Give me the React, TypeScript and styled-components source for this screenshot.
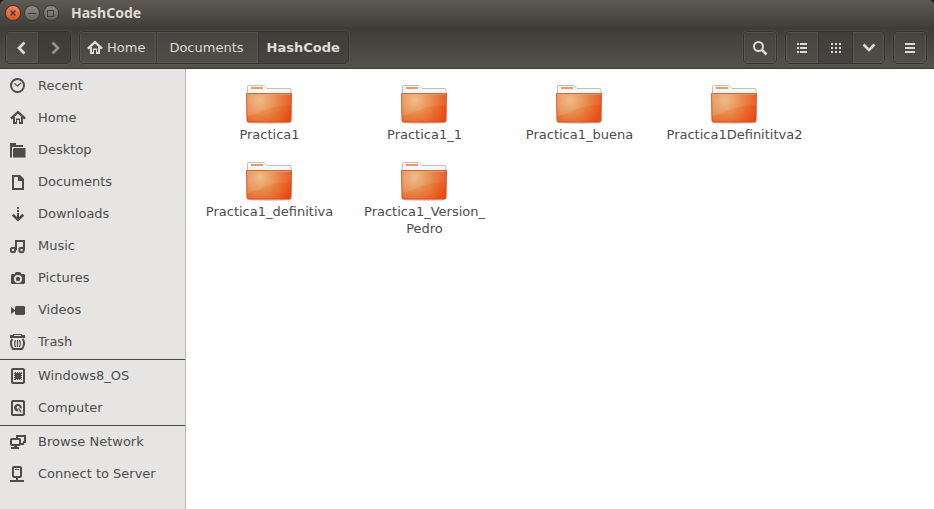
import React, { ReactNode } from "react";
import styled, { createGlobalStyle, css } from "styled-components";

const GlobalStyle = createGlobalStyle`
  * { box-sizing: border-box; }
  html, body, #root { height: 100%; }
  body {
    margin: 0;
    background: #fff;
    color: #4c4c4c;
    font: 13px/17px "DejaVu Sans", sans-serif;
  }
  button { font: inherit; color: inherit; cursor: default; }
`;

const Window = styled.div`
  display: flex;
  flex-direction: column;
  min-height: 100%;
  background: #1b1a18;
`;

const TitleBar = styled.header`
  display: flex;
  align-items: center;
  gap: 3px;
  height: 27px;
  padding: 0 5px 2px;
  border-radius: 5px 5px 0 0;
  background: linear-gradient(#5c5a51, #403f3a);
`;

const Title = styled.h1`
  margin: 0 0 0 9px;
  color: #dfdbd2;
  font: 700 14px/20px "Noto Sans", sans-serif;
`;

const WindowButton = styled.button<{ $close?: boolean }>`
  display: grid;
  place-items: center;
  width: 16px;
  height: 16px;
  padding: 0;
  border: 1px solid #3b3934;
  border-radius: 50%;
  color: #3c3b37;
  background: ${(p) =>
    p.$close
      ? "linear-gradient(#f68459, #e2531f)"
      : "linear-gradient(#8d8b84, #67655e)"};
`;

const Toolbar = styled.div`
  display: flex;
  align-items: flex-start;
  gap: 8px;
  height: 42px;
  padding: 4px 7px 0 5px;
  border-bottom: 1px solid #393833;
  color: #dfdbd2;
  background: linear-gradient(#3d3c38, #53514a);
`;

const Spacer = styled.div`
  flex: 1;
`;

const Group = styled.div`
  display: flex;
  height: 33px;
  border: 1px solid #34332f;
  border-radius: 5px;
  overflow: hidden;
  box-shadow: 0 0 0 1px rgba(255, 255, 255, 0.04);
`;

const ToolButton = styled.button<{ $active?: boolean; $path?: boolean }>`
  display: flex;
  align-items: center;
  justify-content: center;
  gap: 4px;
  min-width: 32px;
  padding: 0;
  border: 0;
  background: linear-gradient(#45443f, #504e48);
  box-shadow: inset 0 0 0 1px rgba(255, 255, 255, 0.07);

  & + & {
    border-left: 1px solid #373632;
  }
  ${(p) =>
    p.$path &&
    css`
      padding: 0 14px 0 12px;
      &:first-child { padding: 0 11px 0 7px; }
      &:last-child { padding: 0 8px; font-weight: 700; }
    `}
  ${(p) =>
    p.$active &&
    css`
      min-width: 34px;
      background: linear-gradient(#3f3e39, #454440);
      box-shadow: none;
    `}
  &:disabled {
    color: #96938b;
    background: linear-gradient(#3c3b37, #42413c);
    box-shadow: none;
  }
`;

const Body = styled.div`
  display: flex;
  flex: 1;
`;

const Sidebar = styled.nav`
  flex: 0 0 186px;
  padding-top: 1px;
  border-right: 1px solid #b8b5af;
  background: #e6e5e3;
`;

const PlaceList = styled.ul`
  margin: 0;
  padding: 0;
  list-style: none;

  & + & {
    margin-top: 1px;
    border-top: 1px solid #4a4a4a;
  }
`;

const PlaceLink = styled.a`
  display: flex;
  align-items: center;
  gap: 12px;
  height: 32px;
  padding-left: 10px;
  color: #4c4c4c;
  text-decoration: none;

  span { padding-bottom: 1px; }
`;

const Files = styled.main`
  display: grid;
  flex: 1;
  grid-template-columns: repeat(auto-fill, 155px);
  align-content: start;
  row-gap: 14px;
  padding: 11px 0 12px 6px;
  background: #fff;
`;

const FolderItem = styled.button`
  display: flex;
  flex-direction: column;
  align-items: center;
  padding: 0;
  border: 0;
  background: none;
`;

const FolderName = styled.span`
  margin-top: -2px;
`;

const Glyph = styled.svg`
  display: block;
  flex: none;
  fill: currentColor;
`;

const SharedDefs = styled.svg`
  position: absolute;
`;

function Icon({ size = 16, children }: { size?: number; children: ReactNode }) {
  return (
    <Glyph width={size} height={size} viewBox={`0 0 ${size} ${size}`} aria-hidden="true">
      {children}
    </Glyph>
  );
}

const line = { fill: "none", stroke: "currentColor", strokeWidth: 2 };

const homeShape = (
  <>
    <path d="M.9 8.600 8 2.200l7.100 6.400" {...line} strokeWidth={2.4} />
    <path d="M3 7h2v7H3zM11 7h2v7h-2zM4 12h3v2H4zM9 12h3v2H9zM6 9h1v4H6zM9 9h1v4H9zM6 8.500h4V10H6z" />
  </>
);

const icons: Record<string, ReactNode> = {
  recent: (
    <>
      <circle cx="7.5" cy="7.500" r="6.500" {...line} />
      <path d="M4.500 5.500 7.500 8l3.500-3" {...line} strokeWidth={1.3} />
    </>
  ),
  home: homeShape,
  desktop: <path d="M0 1h6v2h7v2H2v10.500H0zM4 6h11.500v9.500H3V7z" />,
  documents: (
    <>
      <path d="M3 2h6l4 4v9H3z" {...line} />
      <path d="M8 1h2l4 4v2H8z" />
    </>
  ),
  downloads: (
    <>
      <path d="M7 1h2v2H7zM7 4h2v2H7zM7 7h2v6H7z" />
      <path d="m2.700 8.700 5.300 5 5.300-5" {...line} strokeWidth={2.6} />
    </>
  ),
  music: (
    <>
      <circle cx="3" cy="12" r="2.200" {...line} />
      <circle cx="11.500" cy="12" r="2.200" {...line} />
      <path d="M6 12V3h8v9" {...line} />
    </>
  ),
  pictures: (
    <>
      <path
        fillRule="evenodd"
        d="M2 4h3V3l1-1h4l1 1v1h3l1 1v8l-1 1H2l-1-1V5zM8 5a4 4 0 1 0 0 8 4 4 0 0 0 0-8z"
      />
      <circle cx="8" cy="9" r="2.200" />
    </>
  ),
  videos: <path d="M1 5l4 3V5l1-1h8l1 1v7l-1 1H6l-1-1V9l-4 3z" />,
  trash: (
    <>
      <path d="M3 0h9v1h3v3H0V1h3zM4 1v1h7V1z" fillRule="evenodd" />
      <path d="M2.500 5C.5 7 .5 11 3 15h9c2.500-4 2.500-8 .5-10" {...line} />
      <path
        d="M5.500 6c-1 2-1 5 .2 7M9.500 6c1 2 1 5-.2 7M7.500 6v7"
        {...line}
        strokeWidth={1.2}
      />
    </>
  ),
  drive: (
    <>
      <rect x="2" y="1" width="12" height="14" rx="1" {...line} />
      <path d="M5 4h1v1h1V4h1v1h1V4h1v1h1V4h1v2h-1v1h1v1h-1v1h1v1h-1v1h1v1h-1v-1h-1v1H9v-1H8v1H7v-1H6v1H4v-1h1v-1H4V9h1V8H4V7h1V6H4V5h1z" />
    </>
  ),
  computer: (
    <>
      <rect x="2" y="1" width="12" height="14" rx="1" {...line} />
      <path
        fillRule="evenodd"
        d="M8 4a3.800 3.800 0 0 1 3.700 4.800L9.500 7.400A1.500 1.500 0 1 0 7.600 9l1 2.500A3.800 3.800 0 1 1 8 4z"
      />
      <path d="m8 8 1.800.6L12 13l-2-1z" />
    </>
  ),
  network: (
    <>
      <path d="M7 4V2h8v6h-2" {...line} />
      <path d="M11 9h3v2h-3z" />
      <rect x="1" y="5" width="9" height="6" rx="1" {...line} />
      <path d="M4 11h3v2h2v2H1v-2h3z" />
    </>
  ),
  server: (
    <>
      <rect x="3" y="1" width="8" height="10" rx="1" {...line} />
      <path d="M5 3h4v1H5zM6 11h2v3h6v2H0v-2h6z" />
    </>
  ),
};

const places = [
  [
    ["recent", "Recent"],
    ["home", "Home"],
    ["desktop", "Desktop"],
    ["documents", "Documents"],
    ["downloads", "Downloads"],
    ["music", "Music"],
    ["pictures", "Pictures"],
    ["videos", "Videos"],
    ["trash", "Trash"],
  ],
  [
    ["drive", "Windows8_OS"],
    ["computer", "Computer"],
  ],
  [
    ["network", "Browse Network"],
    ["server", "Connect to Server"],
  ],
];

const folders: ReactNode[] = [
  "Practica1",
  "Practica1_1",
  "Practica1_buena",
  "Practica1Definititva2",
  "Practica1_definitiva",
  <>
    Practica1_Version_
    <br />
    Pedro
  </>,
];

function FolderPicture() {
  return (
    <svg width="48" height="48" viewBox="1 0 48 48" aria-hidden="true">
      <ellipse cx="24" cy="42.500" rx="22" ry="1.500" fill="#000" opacity=".18" />
      <path
        d="M2.500 16V6.500q0-1 1-1h15q1 0 1.500 1L22 8.500H45q1 0 1 1V16z"
        fill="#f6f6f5"
        stroke="#c0c0be"
      />
      <path d="M6 7h12v2H6z" fill="#ee9a65" />
      <path
        d="M1.500 13.500h45l-.5 27q0 1.500-1.500 1.500h-41Q2 42 2 40.500z"
        fill="url(#front)"
        stroke="url(#edge)"
      />
      <path d="M2 14h44v11Q25 26 17 31 10 35 2.500 36z" fill="url(#gloss)" />
      <path d="M2.500 14.500h43" stroke="#f0a878" strokeOpacity=".6" />
    </svg>
  );
}

export default function App() {
  return (
    <>
      <GlobalStyle />
      <SharedDefs width="0" height="0" aria-hidden="true">
        <defs>
          <radialGradient id="front" gradientUnits="userSpaceOnUse" cx="15" cy="20" r="34">
            <stop offset="0" stopColor="#ecb67c" />
            <stop offset=".5" stopColor="#e7803f" />
            <stop offset="1" stopColor="#ea4a14" />
          </radialGradient>
          <linearGradient id="edge" x1="0" y1="0" x2="0" y2="1">
            <stop offset="0" stopColor="#c9683c" />
            <stop offset="1" stopColor="#dd4a16" />
          </linearGradient>
          <linearGradient id="gloss" x1="0" y1="0" x2="1" y2="0">
            <stop offset="0" stopColor="#fff" stopOpacity=".12" />
            <stop offset="1" stopColor="#fff" stopOpacity=".06" />
          </linearGradient>
        </defs>
      </SharedDefs>
      <Window>
        <TitleBar>
          <WindowButton $close aria-label="Close">
            <Icon size={14}>
              <path d="m4.500 4.500 5 5m0-5-5 5" {...line} strokeWidth={1.4} />
            </Icon>
          </WindowButton>
          <WindowButton aria-label="Minimize">
            <Icon size={14}>
              <path d="M3 7.500h8" {...line} strokeWidth={1} />
            </Icon>
          </WindowButton>
          <WindowButton aria-label="Maximize">
            <Icon size={14}>
              <path d="M3.500 4.500h6v6h-6z" {...line} strokeWidth={1} />
            </Icon>
          </WindowButton>
          <Title>HashCode</Title>
        </TitleBar>
        <Toolbar role="toolbar">
          <Group>
            <ToolButton aria-label="Back">
              <Icon>
                <path d="M10.500 2.500 5 8l5.500 5.500" {...line} strokeWidth={2.6} />
              </Icon>
            </ToolButton>
            <ToolButton aria-label="Forward" disabled>
              <Icon>
                <path d="M5.500 2.500 11 8l-5.500 5.500" {...line} strokeWidth={2.6} />
              </Icon>
            </ToolButton>
          </Group>
          <Group>
            <ToolButton $path>
              <Icon>{homeShape}</Icon>
              Home
            </ToolButton>
            <ToolButton $path>Documents</ToolButton>
            <ToolButton $path $active>
              HashCode
            </ToolButton>
          </Group>
          <Spacer />
          <Group>
            <ToolButton aria-label="Search">
              <Icon>
                <circle cx="6.500" cy="6.500" r="4.500" {...line} />
                <path d="m10 10 4.500 4.500" {...line} strokeWidth={2.6} />
              </Icon>
            </ToolButton>
          </Group>
          <Group>
            <ToolButton aria-label="List view">
              <Icon>
                <path d="M3 3h2v2H3zM6 3h7v2H6zM3 7h2v2H3zM6 7h7v2H6zM3 11h2v2H3zM6 11h7v2H6z" />
              </Icon>
            </ToolButton>
            <ToolButton $active aria-label="Icon view">
              <Icon>
                <path d="M3 3h2v2H3zM7 3h2v2H7zM11 3h2v2h-2zM3 7h2v2H3zM7 7h2v2H7zM11 7h2v2h-2zM3 11h2v2H3zM7 11h2v2H7zM11 11h2v2h-2z" />
              </Icon>
            </ToolButton>
            <ToolButton aria-label="View options">
              <Icon>
                <path d="M2.500 4.500 8 10l5.500-5.500" {...line} strokeWidth={2.6} />
              </Icon>
            </ToolButton>
          </Group>
          <Group>
            <ToolButton aria-label="Menu">
              <Icon>
                <path d="M3 3h10v2H3zM3 7h10v2H3zM3 11h10v2H3z" />
              </Icon>
            </ToolButton>
          </Group>
        </Toolbar>
        <Body>
          <Sidebar aria-label="Places">
            {places.map((group, i) => (
              <PlaceList key={i}>
                {group.map(([icon, label]) => (
                  <li key={label}>
                    <PlaceLink href="#">
                      <Icon>{icons[icon]}</Icon>
                      <span>{label}</span>
                    </PlaceLink>
                  </li>
                ))}
              </PlaceList>
            ))}
          </Sidebar>
          <Files>
            {folders.map((name, i) => (
              <FolderItem key={i}>
                <FolderPicture />
                <FolderName>{name}</FolderName>
              </FolderItem>
            ))}
          </Files>
        </Body>
      </Window>
    </>
  );
}
